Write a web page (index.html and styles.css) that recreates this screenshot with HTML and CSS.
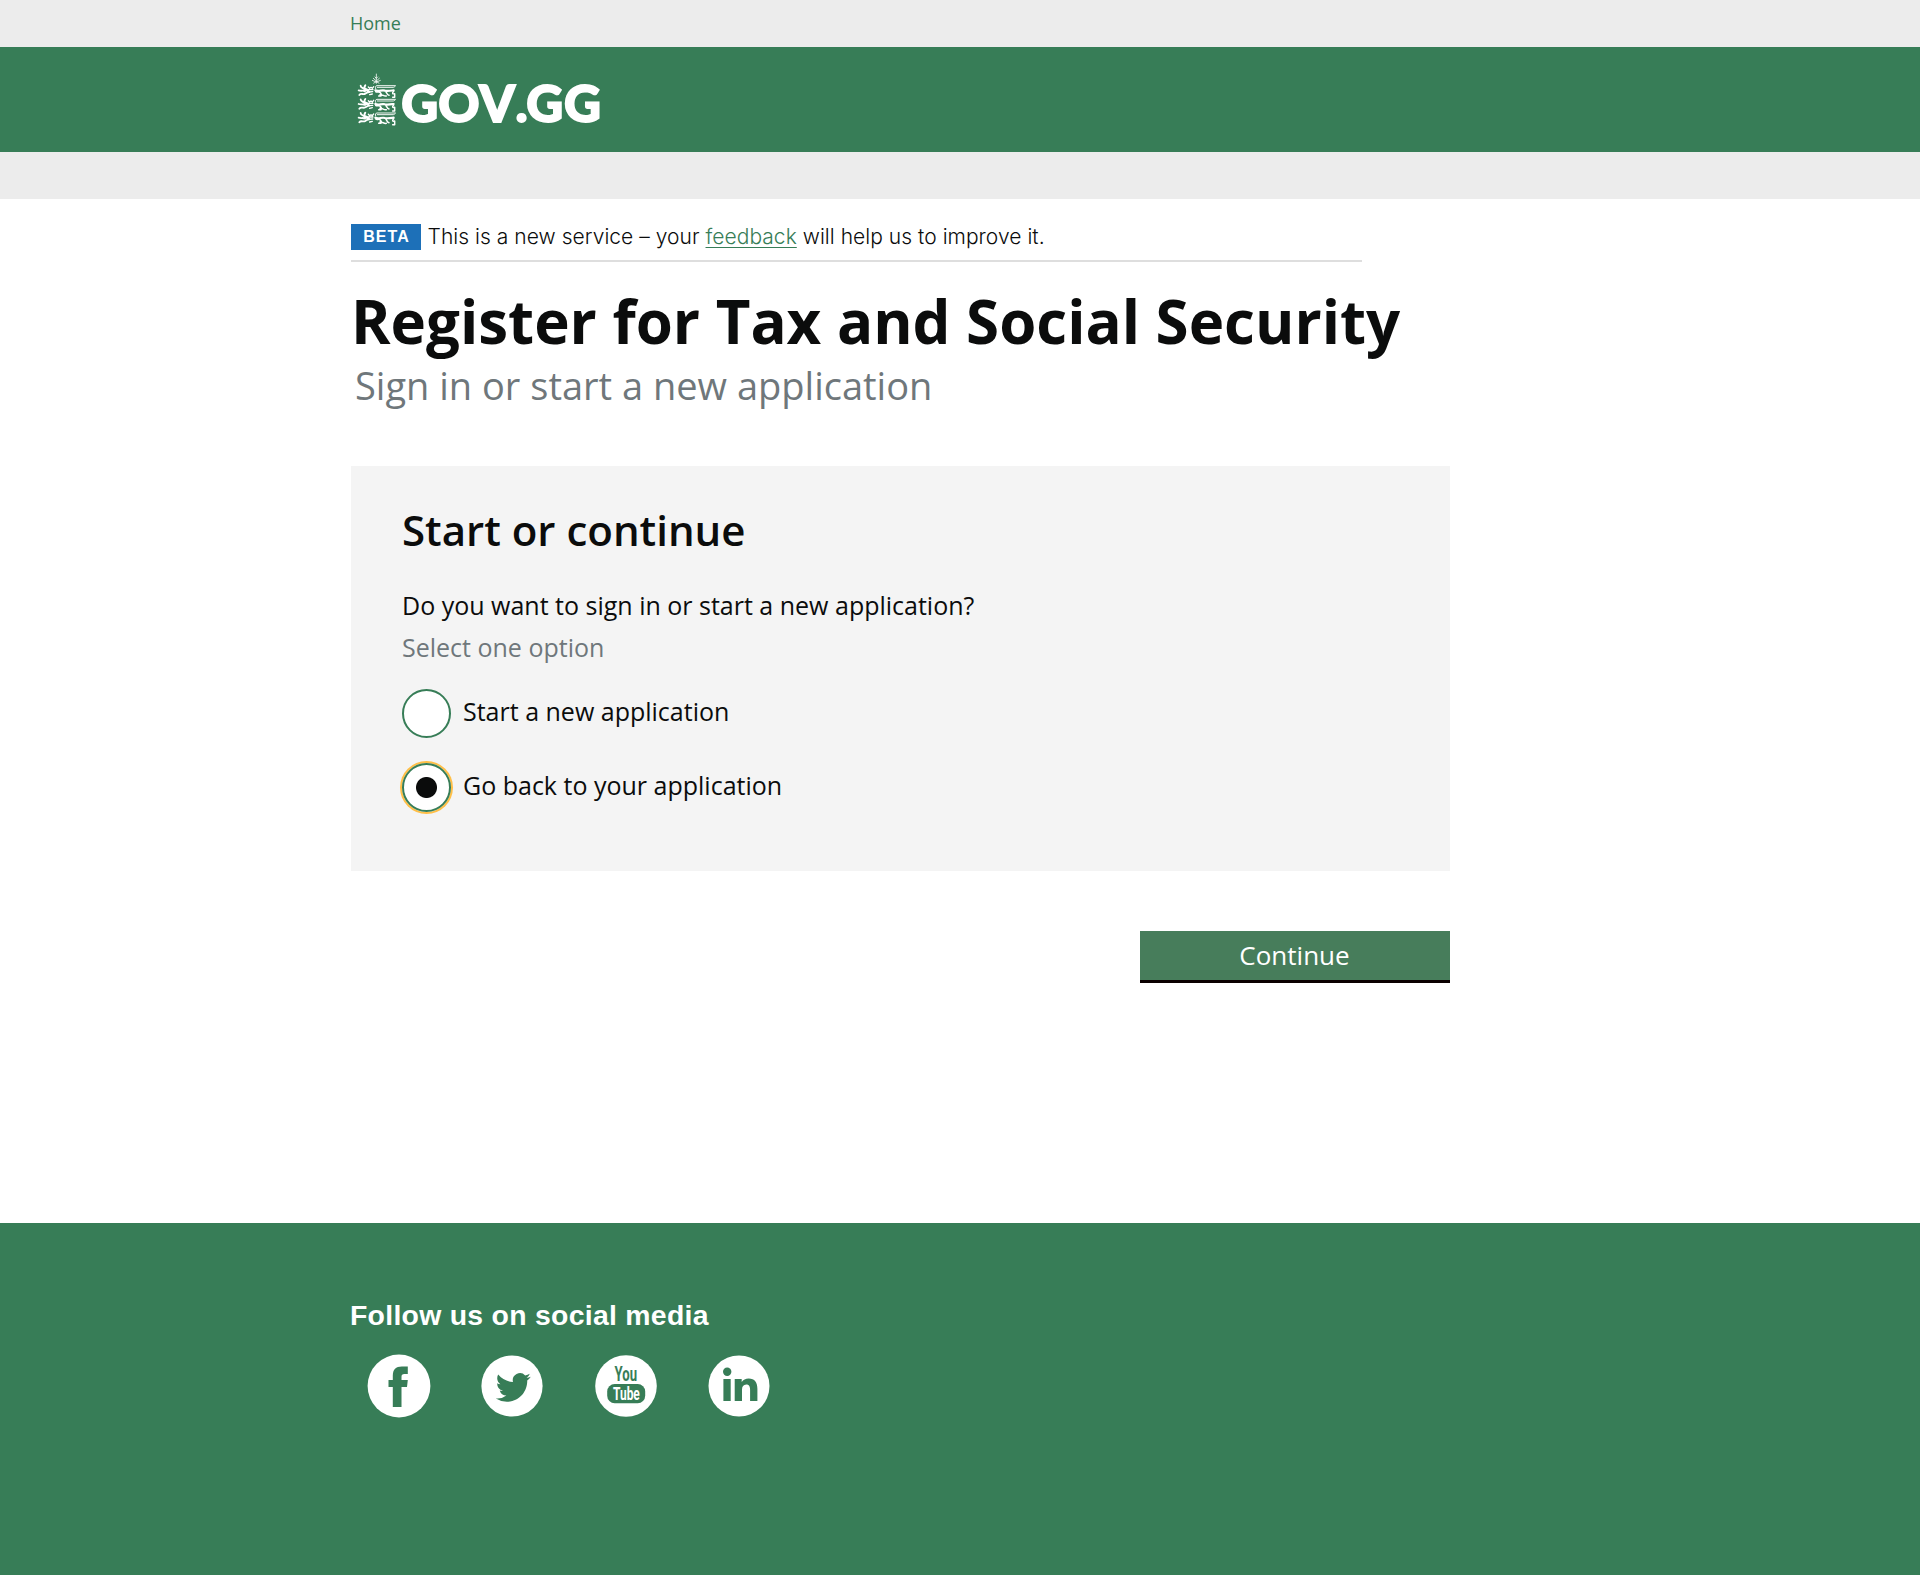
FILE: index.html
```
<!DOCTYPE html>
<html lang="en">
<head>
<meta charset="utf-8">
<title>Register for Tax and Social Security</title>
<link rel="stylesheet" href="styles.css">
</head>
<body>
<nav class="topbar"><div class="wrap"><a class="home" href="#">Home</a></div></nav>
<header class="header">
  <div class="wrap">
    <svg class="logo" width="250" height="70" viewBox="0 -5 250 70" role="img" aria-label="GOV.GG">
      <defs>
        <g id="lion" fill="none" stroke="#fff" stroke-linecap="round" stroke-linejoin="round">
          <path stroke-width="5.500" d="M62 77c0 8 8 5 13 13l12 4M76 76c-3 4-4 7-1 10l10 4M56 91c7 3 12-1 19 3M58 105c5-7 11 0 18-4s6-5 12-5"/>
          <path stroke-width="4" d="M85 81l4 4 4-3 4 3 4-5M86 89h13M86 96l12-1M89 104l8-2"/>
          <path stroke-width="2.800" d="M107 86c-2-5 0-9 4-9h55M112 82h48c3 0 3-2 5-3"/>
          <path stroke-width="6.500" d="M106 91c10 5 18-2 29 1 9 2 18 0 26-1"/>
          <path stroke-width="4.500" d="M107 95c5 4 9-2 14 3l3 5M116 108h7M120 104c8-1 12 6 19 4M138 96c3 3 3 9 9 10M161 94c-5 5-4 9 3 7v11h-6"/>
        </g>
      </defs>
      <g transform="translate(-11 -14) scale(.3333)">
        <g fill="none" stroke="#fff" stroke-width="2.4">
          <path d="M109 41v30M104 50l5 5 5-5M99 54l10 9 10-9M96 61l13 5 13-5M100 70l9-5 9 5"/>
        </g>
        <use href="#lion"/><use href="#lion" y="41"/><use href="#lion" y="82"/>
      </g>
      <text class="wordmark" y="48.2" x="50.2 87.2 128.200 164.500 175.200 212.900">GOV.GG</text>
    </svg>
  </div>
</header>
<div class="strip"></div>
<main class="wrap main">
  <div class="phase"><strong class="tag">BETA</strong><p class="phase-text">This is a new service – your <a class="link" href="#">feedback</a> will help us to improve it.</p></div>
  <h1 class="title">Register for Tax and Social Security</h1>
  <p class="subtitle">Sign in or start a new application</p>
  <form class="form">
    <section class="panel">
      <h2 class="panel-title">Start or continue</h2>
      <p class="question">Do you want to sign in or start a new application?</p>
      <p class="hint">Select one option</p>
      <label class="option"><input class="radio" type="radio" name="action"><span>Start a new application</span></label>
      <label class="option"><input class="radio" type="radio" name="action" checked><span>Go back to your application</span></label>
    </section>
    <button class="continue" type="button">Continue</button>
  </form>
</main>
<footer class="footer">
  <div class="wrap">
    <h2 class="follow">Follow us on social media</h2>
    <div class="social">
      <svg class="icon" viewBox="0 0 64 64"><circle cx="32" cy="32" r="31.4" fill="#fff"/><path d="M25.8 53V33h-4.3v-7h4.3v-4.500c0-6 3-9 9-9h6V20h-3.500c-2 0-2.800.8-2.800 2.800V26h6.300l-.8 7h-5.500v20z"/></svg>
      <svg class="icon" viewBox="0 0 64 64"><circle cx="32" cy="32" r="30.6" fill="#fff"/><path transform="translate(15.800 16) scale(1.458)" d="M23.953 4.57a10 10 0 01-2.825.775 4.958 4.958 0 002.163-2.723c-.951.555-2.005.959-3.127 1.184a4.92 4.92 0 00-8.384 4.482C7.69 8.095 4.067 6.13 1.64 3.162a4.822 4.822 0 00-.666 2.475c0 1.71.87 3.213 2.188 4.096a4.904 4.904 0 01-2.228-.616v.06a4.923 4.923 0 003.946 4.827 4.996 4.996 0 01-2.212.085 4.936 4.936 0 004.604 3.417 9.867 9.867 0 01-6.102 2.105c-.39 0-.779-.023-1.17-.067a13.995 13.995 0 007.557 2.209c9.053 0 13.998-7.496 13.998-13.985 0-.21 0-.42-.015-.63A9.935 9.935 0 0024 4.59z"/></svg>
      <svg class="icon" viewBox="0 0 64 64"><circle cx="32" cy="32" r="30.8" fill="#fff"/><text class="you" x="20.5" y="27" textLength="22.5" lengthAdjust="spacingAndGlyphs">You</text><rect x="13.200" y="30" width="38" height="19.300" rx="7.500"/><text class="tube" x="19" y="46" textLength="26.800" lengthAdjust="spacingAndGlyphs">Tube</text></svg>
      <svg class="icon" viewBox="0 0 64 64"><circle cx="32" cy="32" r="30.5" fill="#fff"/><circle cx="20.200" cy="17.700" r="4.200"/><path d="M16.400 25h7.300v22h-7.300zM27.700 25h7v3c1.500-2.300 3.900-3.600 7-3.600 6 0 8.700 3.800 8.700 10.300V47h-7.300V36c0-3.400-.9-5.500-3.800-5.500-3 0-4.300 2.100-4.300 5.300V47h-7.300z"/></svg>
    </div>
  </div>
</footer>
</body>
</html>
```
FILE: styles.css
```
* { box-sizing: border-box; }
body { margin: 0; background: #fff; color: #0b0c0c; font-family: "Open Sans", "Noto Sans", sans-serif; }
h1, h2, p { margin: 0; }
.wrap { width: 1099px; margin-left: 351px; }
.topbar { height: 47px; background: #ececec; }
.home { display: block; margin-left: -1px; color: #377d57; font-size: 18px; line-height: 46px; text-decoration: none; }
.header { height: 105px; background: #377d57; padding-top: 22px; }
.logo { display: block; overflow: visible; }
.wordmark { font-family: Lato, sans-serif; font-weight: 900; font-size: 51px; fill: #fff; stroke: #fff; stroke-width: 1.8px; }
.strip { height: 47px; background: #ececec; }
.main { height: 1024px; padding-top: 25px; }
.phase { display: flex; gap: 6.5px; width: 1011px; height: 38px; border-bottom: 2px solid #dedede; }
.tag { width: 70px; height: 26px; background: #1d70b8; color: #fff; font: bold 16px/25px "Liberation Sans", sans-serif; letter-spacing: 1px; padding-left: 1px; text-align: center; }
.phase-text { font: 300 21px/26px Inter, sans-serif; letter-spacing: .04px; white-space: nowrap; }
.link { color: #377d57; text-decoration: underline; text-decoration-thickness: 1px; text-underline-offset: 3px; }
.title { margin-top: 20px; font-size: 60px; line-height: 78px; font-weight: 700; white-space: nowrap; }
.subtitle { font-size: 38px; line-height: 50px; color: #6f777b; padding-left: 4px; }
.panel { height: 405px; margin-top: 56px; padding: 36px 51px 0; background: #f4f4f4; }
.panel-title { font-size: 42px; line-height: 56px; font-weight: 600; }
.question { margin-top: 30px; font-size: 25px; line-height: 34px; }
.hint { margin: 8px 0 25px; font-size: 25px; line-height: 34px; color: #6f777b; }
.option { display: flex; gap: 12px; height: 49px; margin-bottom: 25px; font-size: 25px; line-height: 45px; }
.radio { appearance: none; width: 49px; height: 49px; margin: 0; border: 2px solid #377d57; border-radius: 50%; background: #fff; }
.radio:checked { background: radial-gradient(circle, #0b0c0c 10px, #fff 11px); box-shadow: 0 0 0 2px #ffbf47; }
.continue { display: block; width: 310px; height: 52px; margin: 60px 0 0 auto; padding: 0 1px 0 0; border: 0; border-bottom: 3px solid #0b0000; background: #477d5b; color: #fff; font: 26px/47px "Open Sans", sans-serif; }
.footer { height: 352px; padding-top: 76px; background: #377d57; }
.follow { color: #fff; font: bold 28.4px/33px "Liberation Sans", sans-serif; letter-spacing: .28px; margin-left: -1px; }
.social { display: flex; gap: 49.67px; margin: 22px 0 0 15.5px; }
.icon { width: 64px; height: 64px; fill: #377d57; }
.you, .tube { font-family: Roboto, sans-serif; font-weight: 700; }
.you { font-size: 21px; }
.tube { font-size: 18px; fill: #fff; }
```
